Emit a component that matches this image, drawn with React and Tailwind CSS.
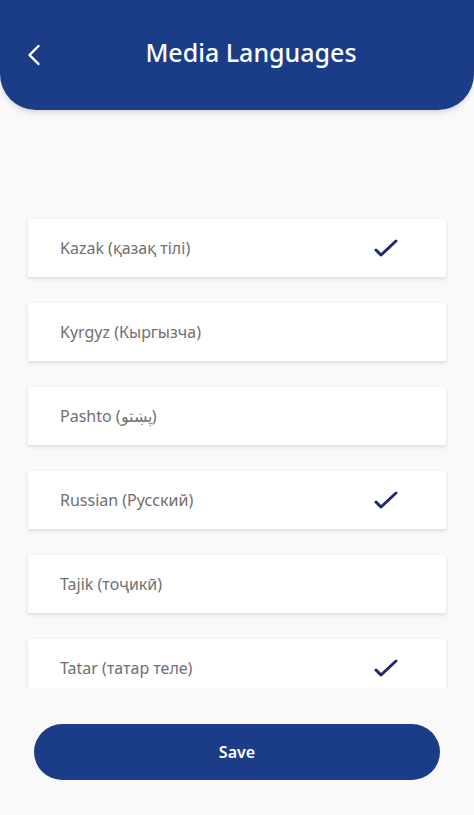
import { ChevronLeft } from 'lucide-react';

const languages = [
  { name: 'Kazak (қазақ тілі)', checked: true },
  { name: 'Kyrgyz (Кыргызча)', checked: false },
  { name: 'Pashto (پښتو)', checked: false },
  { name: 'Russian (Русский)', checked: true },
  { name: 'Tajik (тоҷикӣ)', checked: false },
  { name: 'Tatar (татар теле)', checked: true },
];

function Check() {
  return (
    <svg width="24" height="20" viewBox="0 0 24 20" fill="none">
      <path d="M2 12 L7 17 L22 3" stroke="#1f2a6b" strokeWidth="3" strokeLinecap="round" strokeLinejoin="round" />
    </svg>
  );
}

export default function App() {
  return (
    <div className="h-[815px] w-[474px] flex flex-col bg-[#f9f9f9] overflow-hidden font-['Noto_Sans',sans-serif]">
      {/* HEADER */}
      <header className="h-[110px] shrink-0 bg-[#1b3d87] rounded-b-[36px] shadow-md flex items-center px-5 relative z-10">
        <ChevronLeft className="h-9 w-9 text-white -ml-1" strokeWidth={1.6} />
        <h1 className="flex-1 text-center text-white text-[25px] font-medium -mt-1 pr-1">Media Languages</h1>
      </header>

      {/* LIST */}
      <div className="flex-1 overflow-hidden pt-[109px] px-[28px]">
        <div className="flex flex-col gap-[26px]">
          {languages.map((lang) => (
            <div key={lang.name} className="h-[58px] shrink-0 bg-white shadow-[0_2px_4px_rgba(0,0,0,0.12)] flex items-center justify-between pl-[32px] pr-[48px]">
              <span className="text-[16px] text-[#707070]">{lang.name}</span>
              {lang.checked && <Check />}
            </div>
          ))}
        </div>
      </div>

      {/* FOOTER */}
      <div className="h-[127px] shrink-0 px-[34px] pt-[36px]">
        <button className="w-full h-[56px] rounded-full bg-[#1b3d87] text-white text-[16px] font-semibold">Save</button>
      </div>
    </div>
  );
}
